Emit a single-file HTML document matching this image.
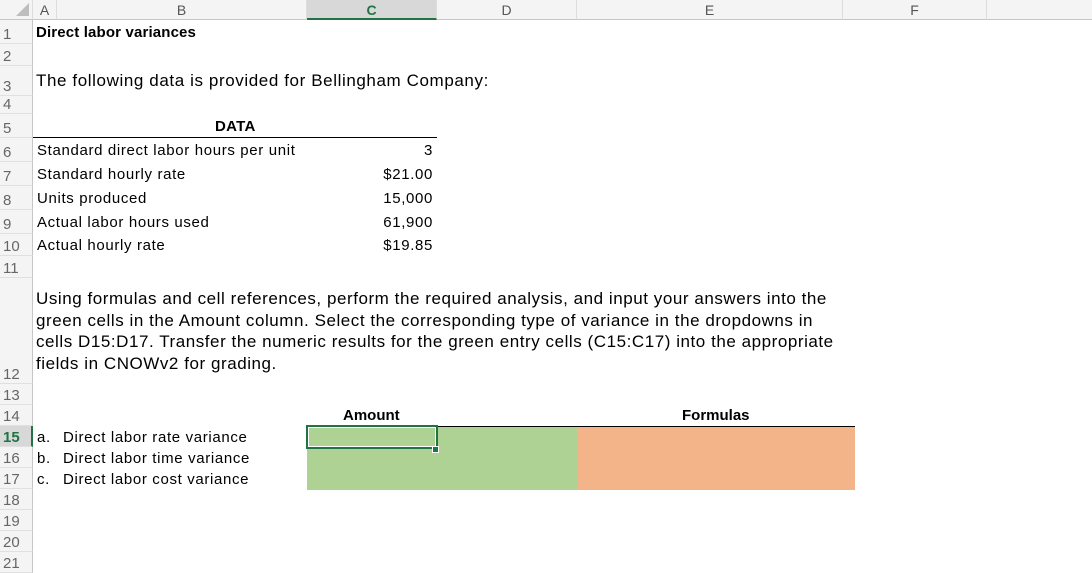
<!DOCTYPE html>
<html><head><style>
body{margin:0;width:1092px;height:570px;overflow:hidden;background:#fff;font-family:"Liberation Sans",Arial,sans-serif;position:relative}
.a{position:absolute}
.hdr{position:absolute;top:0;height:20px;background:#f4f4f4;border-bottom:1px solid #c6c6c6;color:#555;font-size:14px;text-align:center;line-height:20px;box-sizing:border-box;border-right:1px solid #dcdcdc}
.rn{position:absolute;left:0;width:33px;box-sizing:border-box;background:#f4f4f4;border-right:1px solid #c6c6c6;border-bottom:1px solid #e0e0e0;color:#666;font-size:15px;padding-left:3px;display:flex;align-items:flex-end;padding-bottom:0px}
.t{position:absolute;font-size:15px;color:#000;white-space:nowrap;letter-spacing:0.65px}
.r{text-align:right;width:120px}
</style></head><body>
<div class="hdr" style="left:0;width:33px;background:#f4f4f4"><div style="position:absolute;right:3px;bottom:3px;width:0;height:0;border-left:13px solid transparent;border-bottom:13px solid #bdbdbd"></div></div>
<div class="hdr" style="left:33px;width:24px">A</div>
<div class="hdr" style="left:57px;width:250px">B</div>
<div class="hdr" style="left:307px;width:130px;background:#d8d8d8;color:#217346;font-weight:bold;border-bottom:2px solid #217346">C</div>
<div class="hdr" style="left:437px;width:140px">D</div>
<div class="hdr" style="left:577px;width:266px">E</div>
<div class="hdr" style="left:843px;width:144px">F</div>
<div class="hdr" style="left:987px;width:105px;border-right:none"></div>

<div class="rn" style="top:20px;height:24px">1</div>
<div class="rn" style="top:44px;height:22px">2</div>
<div class="rn" style="top:66px;height:30px">3</div>
<div class="rn" style="top:96px;height:18px">4</div>
<div class="rn" style="top:114px;height:24px">5</div>
<div class="rn" style="top:138px;height:24px">6</div>
<div class="rn" style="top:162px;height:24px">7</div>
<div class="rn" style="top:186px;height:24px">8</div>
<div class="rn" style="top:210px;height:24px">9</div>
<div class="rn" style="top:234px;height:22px">10</div>
<div class="rn" style="top:256px;height:22px">11</div>
<div class="rn" style="top:278px;height:106px">12</div>
<div class="rn" style="top:384px;height:21px">13</div>
<div class="rn" style="top:405px;height:21px">14</div>
<div class="rn" style="top:426px;height:21px;background:#d8d8d8;color:#217346;font-weight:bold;border-right:2px solid #217346">15</div>
<div class="rn" style="top:447px;height:21px">16</div>
<div class="rn" style="top:468px;height:21px">17</div>
<div class="rn" style="top:489px;height:21px">18</div>
<div class="rn" style="top:510px;height:21px">19</div>
<div class="rn" style="top:531px;height:21px">20</div>
<div class="rn" style="top:552px;height:21px">21</div>

<div class="t" style="left:36px;top:24px;font-weight:bold;letter-spacing:0.15px">Direct labor variances</div>
<div class="t" style="left:36px;top:71px;font-size:17px;letter-spacing:0.6px">The following data is provided for Bellingham Company:</div>
<div class="t" style="left:215px;top:118px;font-weight:bold;letter-spacing:0.3px">DATA</div>
<div class="a" style="left:33px;top:137px;width:404px;height:1px;background:#000"></div>
<div class="t" style="left:37px;top:142px">Standard direct labor hours per unit</div>
<div class="t" style="left:37px;top:166px">Standard hourly rate</div>
<div class="t" style="left:37px;top:190px">Units produced</div>
<div class="t" style="left:37px;top:214px">Actual labor hours used</div>
<div class="t" style="left:37px;top:237px">Actual hourly rate</div>
<div class="t r" style="left:313px;top:142px">3</div>
<div class="t r" style="left:313px;top:166px">$21.00</div>
<div class="t r" style="left:313px;top:190px">15,000</div>
<div class="t r" style="left:313px;top:214px">61,900</div>
<div class="t r" style="left:313px;top:237px">$19.85</div>

<div class="t" style="left:36px;top:288px;font-size:17px;line-height:21.5px;letter-spacing:0.55px">Using formulas and cell references, perform the required analysis, and input your answers into the<br>green cells in the Amount column. Select the corresponding type of variance in the dropdowns in<br>cells D15:D17. Transfer the numeric results for the green entry cells (C15:C17) into the appropriate<br>fields in CNOWv2 for grading.</div>

<div class="t" style="left:343px;top:407px;font-weight:bold;letter-spacing:0">Amount</div>
<div class="t" style="left:682px;top:407px;font-weight:bold;letter-spacing:0">Formulas</div>
<div class="a" style="left:307px;top:426px;width:548px;height:1px;background:#000"></div>
<div class="a" style="left:307px;top:427px;width:270px;height:63px;background:#aed294"></div>
<div class="a" style="left:577px;top:427px;width:278px;height:63px;background:#f4b48a"></div>
<div class="a" style="left:306px;top:425px;width:128px;height:20px;border:2px solid #217346;box-shadow:inset 0 0 0 1px #fff"></div>
<div class="a" style="left:432px;top:446px;width:5px;height:5px;background:#217346;border:1px solid #fff"></div>

<div class="t" style="left:37px;top:429px">a.</div><div class="t" style="left:63px;top:429px">Direct labor rate variance</div>
<div class="t" style="left:37px;top:450px">b.</div><div class="t" style="left:63px;top:450px">Direct labor time variance</div>
<div class="t" style="left:37px;top:471px">c.</div><div class="t" style="left:63px;top:471px">Direct labor cost variance</div>
</body></html>
